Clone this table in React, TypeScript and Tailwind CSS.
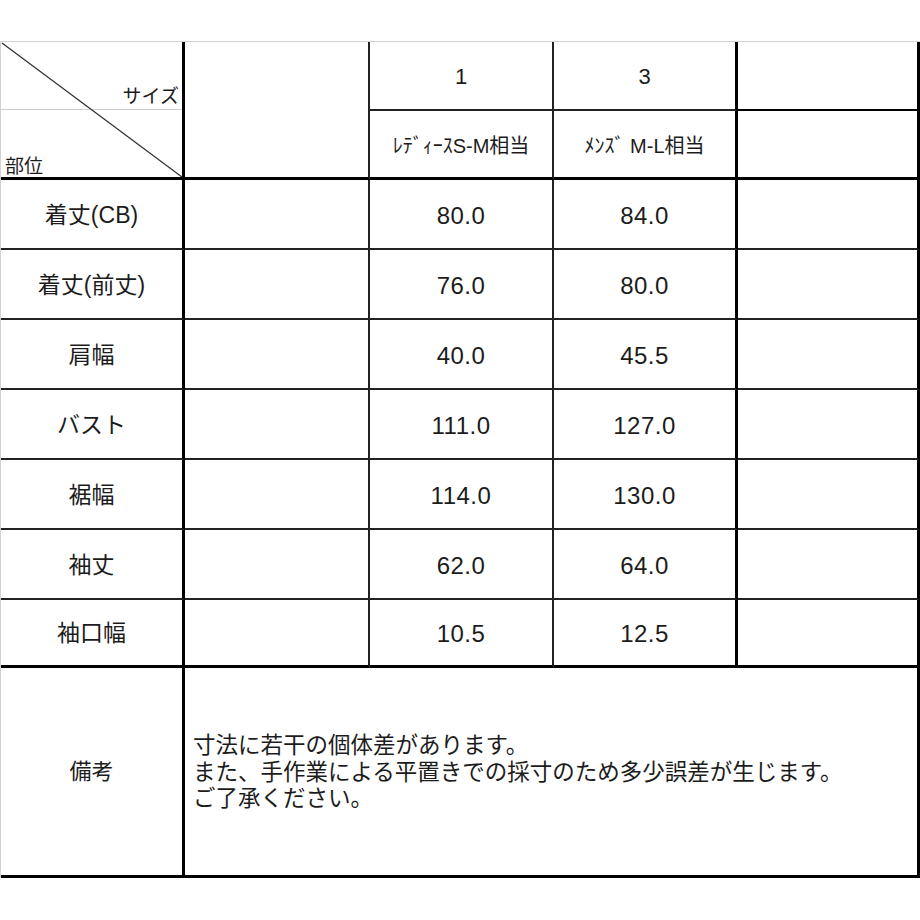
import React from 'react';

const rows = [
  { part: '着丈(CB)', a: '80.0', b: '84.0' },
  { part: '着丈(前丈)', a: '76.0', b: '80.0' },
  { part: '肩幅', a: '40.0', b: '45.5' },
  { part: 'バスト', a: '111.0', b: '127.0' },
  { part: '裾幅', a: '114.0', b: '130.0' },
  { part: '袖丈', a: '62.0', b: '64.0' },
  { part: '袖口幅', a: '10.5', b: '12.5' },
];

const cell = 'flex items-center justify-center border-[#222]';

export default function App() {
  return (
    <div
      className="w-[920px] h-[920px] bg-white text-[#1c1c1c]"
      style={{ fontFamily: '"Liberation Sans", "Noto Sans CJK JP", sans-serif' }}
    >
      <div className="mt-[41px] border-t border-l border-[#d2d2d2] grid grid-cols-[184px_185px_184px_184px_182px] grid-rows-[69px_69px_repeat(6,70px)_68px_210px]">
        {/* corner header */}
        <div className="relative row-span-2 flex flex-col border-r-[3px] border-b-[3px] border-black">
          <div className="h-[68px] flex items-end justify-end pr-[3px] pb-[2px] border-b border-[#cfcfcf] text-[19px] leading-none">
            <span className="mb-[1px]">サイズ</span>
          </div>
          <div className="flex-1 flex items-end pl-[4px] pb-[1px] text-[19px] leading-none">
            <span>部位</span>
          </div>
          <svg className="absolute inset-0 w-full h-full" viewBox="0 0 181 135" preserveAspectRatio="none">
            <line x1="1" y1="1" x2="181" y2="135" stroke="#333" strokeWidth="1.3" vectorEffect="non-scaling-stroke" />
          </svg>
        </div>
        <div className="row-span-2 border-r-2 border-b-[3px] border-[#222]" style={{ borderBottomColor: '#000' }} />
        <div className={`${cell} border-r-2 border-b-2 pt-[2px] text-[22px]`}>1</div>
        <div className={`${cell} border-r-[3px] border-b-2 pt-[2px] text-[22px]`} style={{ borderRightColor: '#000' }}>3</div>
        <div className="border-r-[3px] border-b-2 border-black" />

        <div className={`${cell} border-r-2 border-b-[3px] pt-[3px] text-[20px]`} style={{ borderBottomColor: '#000' }}>ﾚﾃﾞｨｰｽS-M相当</div>
        <div className={`${cell} border-r-[3px] border-b-[3px] pt-[3px] border-black text-[20px]`}>ﾒﾝｽﾞ M-L相当</div>
        <div className="border-r-[3px] border-b-[3px] border-black" />

        {rows.map((r, i) => {
          const last = i === rows.length - 1;
          const bb = last ? 'border-b-[3px] border-b-black' : 'border-b-2 border-b-[#222]';
          return (
            <React.Fragment key={r.part}>
              <div className={`flex items-center justify-center pt-[2px] border-r-[3px] border-r-black ${bb} text-[23px]`}>{r.part}</div>
              <div className={`border-r-2 border-r-[#222] ${bb}`} />
              <div className={`flex items-center justify-center pt-[3px] border-r-2 border-r-[#222] ${bb} text-[24px] tracking-[0.5px]`}>{r.a}</div>
              <div className={`flex items-center justify-center pt-[3px] border-r-[3px] border-r-black ${bb} text-[24px] tracking-[0.5px]`}>{r.b}</div>
              <div className={`border-r-[3px] border-r-black ${bb}`} />
            </React.Fragment>
          );
        })}

        {/* remarks */}
        <div className="flex items-center justify-center border-r-[3px] border-b-[3px] border-black text-[22px]">備考</div>
        <div className="col-span-4 flex items-center pl-[8px] pt-[3px] border-r-[3px] border-b-[3px] border-black text-[22.5px] leading-[26.5px]">
          <p>
            寸法に若干の個体差があります。
            <br />
            また、手作業による平置きでの採寸のため多少誤差が生じます。
            <br />
            ご了承ください。
          </p>
        </div>
      </div>
    </div>
  );
}
